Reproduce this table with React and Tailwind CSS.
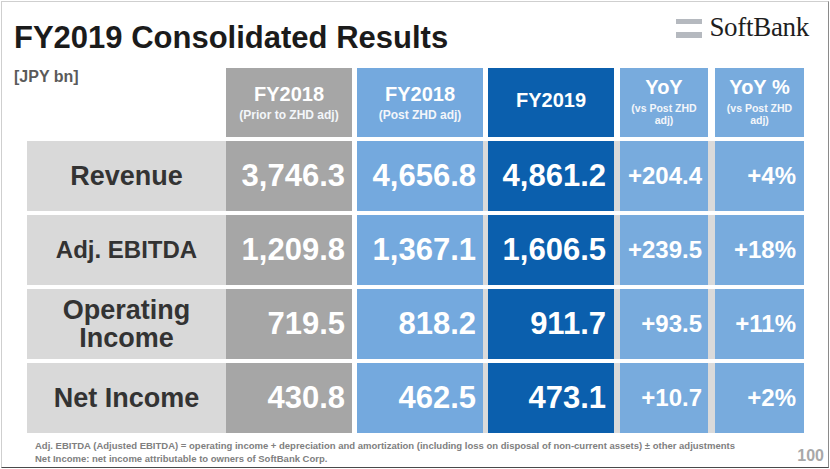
import React from 'react';

const rows = [
  { label: 'Revenue', size: 'text-[27px]', v: ['3,746.3', '4,656.8', '4,861.2', '+204.4', '+4%'] },
  { label: 'Adj. EBITDA', size: 'text-[24px]', v: ['1,209.8', '1,367.1', '1,606.5', '+239.5', '+18%'] },
  { label: ['Operating', 'Income'], size: 'text-[27px]', v: ['719.5', '818.2', '911.7', '+93.5', '+11%'] },
  { label: 'Net Income', size: 'text-[27px]', v: ['430.8', '462.5', '473.1', '+10.7', '+2%'] },
];

function Logo() {
  return (
    <div className="flex items-center gap-[7px]">
      <div className="flex flex-col gap-[8px] pt-[1px]">
        <div className="w-[26px] h-[5px] bg-[#b5b9bf]" />
        <div className="w-[26px] h-[6px] bg-[#b5b9bf]" />
      </div>
      <span className="font-['Liberation_Serif',serif] text-[27px] leading-none text-[#1e1e1e] tracking-[-0.3px]">SoftBank</span>
    </div>
  );
}

function HeadCell({ w, bg, title, sub, subSize = 'text-[12px]', className = '' }) {
  return (
    <div className={`${w} ${bg} ${className} h-full flex flex-col items-center justify-center text-white text-center`}>
      <div className="text-[20px] font-bold leading-none">{title}</div>
      {sub && (
        <div className={`${subSize} font-bold leading-[11.5px] mt-[6px] text-[#f3f6fa]`}>
          {sub}
        </div>
      )}
    </div>
  );
}

export default function App() {
  return (
    <div className="w-[830px] h-[469px] bg-white pl-[1px] pt-[1px] font-['Liberation_Sans',Arial,sans-serif]">
      <div className="w-[828px] h-[467px] border border-[#cfcfcf] border-r-[#8a8a8a] border-b-[#4a4a4a] pl-[12px] flex flex-col">
        {/* title + logo */}
        <div className="flex items-start justify-between h-[45px]">
          <h1 className="text-[31px] font-bold leading-none text-[#1b1b1b] mt-[20px]">FY2019 Consolidated Results</h1>
          <div className="mt-[12px] mr-[19px]">
            <Logo />
          </div>
        </div>

        {/* header row */}
        <div className="flex h-[69px] mt-[21px]">
          <div className="w-[212px] text-[16px] font-bold text-[#5a5a5a] leading-none pt-[1px]">[JPY bn]</div>
          <HeadCell w="w-[126px]" bg="bg-[#a6a6a6]" title="FY2018" sub="(Prior to ZHD adj)" />
          <HeadCell w="w-[126px]" bg="bg-[#74a9de]" title="FY2018" sub="(Post ZHD adj)" className="ml-[5px]" />
          <HeadCell w="w-[126px]" bg="bg-[#0b5fad]" title="FY2019" className="ml-[5px] pb-[6px]" />
          <HeadCell w="w-[88px]" bg="bg-[#78abdd]" title="YoY" sub={<>(vs Post ZHD<br />adj)</>} subSize="text-[10.5px]" className="ml-[6px] pb-[2px]" />
          <HeadCell w="w-[89px]" bg="bg-[#78abdd]" title="YoY %" sub={<>(vs Post ZHD<br />adj)</>} subSize="text-[10.5px]" className="ml-[7px] pb-[2px]" />
        </div>

        {/* data rows */}
        <div className="flex flex-col gap-[4px] mt-[4px] ml-[13px]">
          {rows.map((r, i) => (
            <div key={i} className="flex h-[70px]">
              <div className={`w-[199px] bg-[#d9d9d9] flex flex-col items-center justify-center font-bold text-[#333] leading-none text-center ${r.size}`}>
                {Array.isArray(r.label) ? r.label.map((l) => <div key={l} className="leading-[28px]">{l}</div>) : r.label}
              </div>
              <div className="w-[126px] bg-[#a6a6a6] flex items-center justify-end pr-[7px] text-white font-bold text-[31px]">{r.v[0]}</div>
              <div className="ml-[5px] flex bg-[#dadada]">
                <div className="w-[126px] bg-[#74a9de] flex items-center justify-end pr-[7px] text-white font-bold text-[31px]">{r.v[1]}</div>
                <div className="w-[126px] ml-[5px] bg-[#0b5fad] flex items-center justify-end pr-[8px] text-white font-bold text-[31px]">{r.v[2]}</div>
                <div className="w-[88px] ml-[6px] bg-[#78abdd] flex items-center justify-end pr-[6px] text-white font-bold text-[24px]">{r.v[3]}</div>
                <div className="w-[89px] ml-[7px] bg-[#78abdd] flex items-center justify-end pr-[8px] text-white font-bold text-[24px]">{r.v[4]}</div>
              </div>
            </div>
          ))}
        </div>

        {/* footer */}
        <div className="flex items-end justify-between mt-[7px] ml-[21px] mr-[4px]">
          <div className="text-[9.5px] font-bold leading-[12.5px] text-[#808080]">
            <div>Adj. EBITDA (Adjusted EBITDA) = operating income + depreciation and amortization (including loss on disposal of non-current assets) ± other adjustments</div>
            <div>Net Income: net income attributable to owners of SoftBank Corp.</div>
          </div>
          <div className="text-[16px] font-bold leading-none text-[#a8a8a8] mb-[1px]">100</div>
        </div>
      </div>
    </div>
  );
}
